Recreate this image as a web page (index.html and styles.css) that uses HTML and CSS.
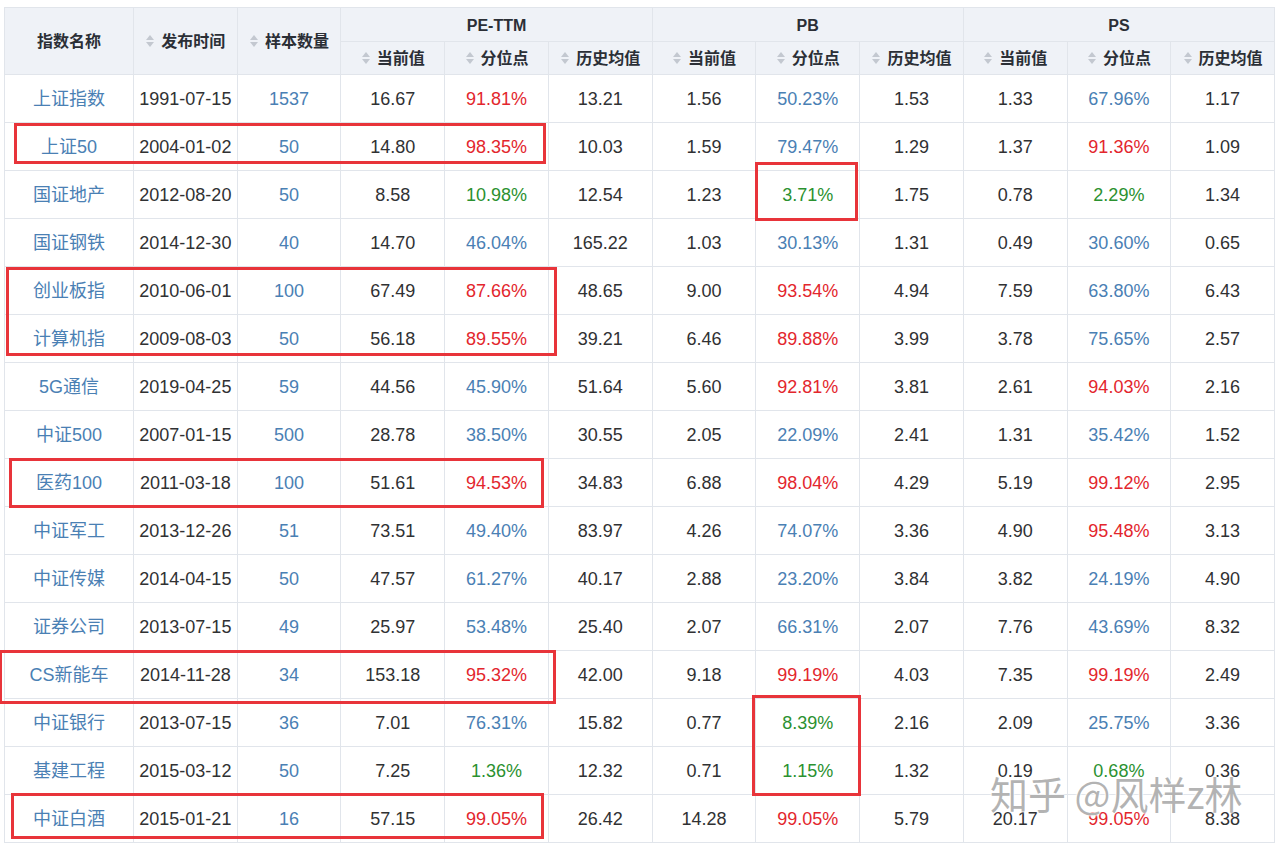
FILE: index.html
```html
<!DOCTYPE html>
<html lang="zh-CN">
<head>
<meta charset="utf-8">
<title>指数估值</title>
<link rel="stylesheet" href="styles.css">
</head>
<body>
<div class="page">
  <table class="grid">
    <colgroup>
      <col class="c-name"><col class="c"><col class="c"><col class="c"><col class="c"><col class="c"><col class="c"><col class="c"><col class="c"><col class="c"><col class="c"><col class="c">
    </colgroup>
    <thead>
      <tr class="h1">
        <th rowspan="2">指数名称</th>
        <th rowspan="2"><span class="sort"><svg viewBox="0 0 10 14"><path d="M5 1 9 6H1Z"/><path d="M1 8H9L5 13Z"/></svg></span>发布时间</th>
        <th rowspan="2"><span class="sort"><svg viewBox="0 0 10 14"><path d="M5 1 9 6H1Z"/><path d="M1 8H9L5 13Z"/></svg></span>样本数量</th>
        <th colspan="3" class="grp">PE-TTM</th>
        <th colspan="3" class="grp">PB</th>
        <th colspan="3" class="grp">PS</th>
      </tr>
      <tr class="h2">
        <th><span class="sort"><svg viewBox="0 0 10 14"><path d="M5 1 9 6H1Z"/><path d="M1 8H9L5 13Z"/></svg></span>当前值</th>
        <th><span class="sort"><svg viewBox="0 0 10 14"><path d="M5 1 9 6H1Z"/><path d="M1 8H9L5 13Z"/></svg></span>分位点</th>
        <th><span class="sort"><svg viewBox="0 0 10 14"><path d="M5 1 9 6H1Z"/><path d="M1 8H9L5 13Z"/></svg></span>历史均值</th>
        <th><span class="sort"><svg viewBox="0 0 10 14"><path d="M5 1 9 6H1Z"/><path d="M1 8H9L5 13Z"/></svg></span>当前值</th>
        <th><span class="sort"><svg viewBox="0 0 10 14"><path d="M5 1 9 6H1Z"/><path d="M1 8H9L5 13Z"/></svg></span>分位点</th>
        <th><span class="sort"><svg viewBox="0 0 10 14"><path d="M5 1 9 6H1Z"/><path d="M1 8H9L5 13Z"/></svg></span>历史均值</th>
        <th><span class="sort"><svg viewBox="0 0 10 14"><path d="M5 1 9 6H1Z"/><path d="M1 8H9L5 13Z"/></svg></span>当前值</th>
        <th><span class="sort"><svg viewBox="0 0 10 14"><path d="M5 1 9 6H1Z"/><path d="M1 8H9L5 13Z"/></svg></span>分位点</th>
        <th><span class="sort"><svg viewBox="0 0 10 14"><path d="M5 1 9 6H1Z"/><path d="M1 8H9L5 13Z"/></svg></span>历史均值</th>
      </tr>
    </thead>
    <tbody>
      <tr><td class="lk">上证指数</td><td>1991-07-15</td><td class="lk">1537</td><td>16.67</td><td class="hi">91.81%</td><td>13.21</td><td>1.56</td><td class="mid">50.23%</td><td>1.53</td><td>1.33</td><td class="mid">67.96%</td><td>1.17</td></tr>
      <tr><td class="lk">上证50</td><td>2004-01-02</td><td class="lk">50</td><td>14.80</td><td class="hi">98.35%</td><td>10.03</td><td>1.59</td><td class="mid">79.47%</td><td>1.29</td><td>1.37</td><td class="hi">91.36%</td><td>1.09</td></tr>
      <tr><td class="lk">国证地产</td><td>2012-08-20</td><td class="lk">50</td><td>8.58</td><td class="lo">10.98%</td><td>12.54</td><td>1.23</td><td class="lo">3.71%</td><td>1.75</td><td>0.78</td><td class="lo">2.29%</td><td>1.34</td></tr>
      <tr><td class="lk">国证钢铁</td><td>2014-12-30</td><td class="lk">40</td><td>14.70</td><td class="mid">46.04%</td><td>165.22</td><td>1.03</td><td class="mid">30.13%</td><td>1.31</td><td>0.49</td><td class="mid">30.60%</td><td>0.65</td></tr>
      <tr><td class="lk">创业板指</td><td>2010-06-01</td><td class="lk">100</td><td>67.49</td><td class="hi">87.66%</td><td>48.65</td><td>9.00</td><td class="hi">93.54%</td><td>4.94</td><td>7.59</td><td class="mid">63.80%</td><td>6.43</td></tr>
      <tr><td class="lk">计算机指</td><td>2009-08-03</td><td class="lk">50</td><td>56.18</td><td class="hi">89.55%</td><td>39.21</td><td>6.46</td><td class="hi">89.88%</td><td>3.99</td><td>3.78</td><td class="mid">75.65%</td><td>2.57</td></tr>
      <tr><td class="lk">5G通信</td><td>2019-04-25</td><td class="lk">59</td><td>44.56</td><td class="mid">45.90%</td><td>51.64</td><td>5.60</td><td class="hi">92.81%</td><td>3.81</td><td>2.61</td><td class="hi">94.03%</td><td>2.16</td></tr>
      <tr><td class="lk">中证500</td><td>2007-01-15</td><td class="lk">500</td><td>28.78</td><td class="mid">38.50%</td><td>30.55</td><td>2.05</td><td class="mid">22.09%</td><td>2.41</td><td>1.31</td><td class="mid">35.42%</td><td>1.52</td></tr>
      <tr><td class="lk">医药100</td><td>2011-03-18</td><td class="lk">100</td><td>51.61</td><td class="hi">94.53%</td><td>34.83</td><td>6.88</td><td class="hi">98.04%</td><td>4.29</td><td>5.19</td><td class="hi">99.12%</td><td>2.95</td></tr>
      <tr><td class="lk">中证军工</td><td>2013-12-26</td><td class="lk">51</td><td>73.51</td><td class="mid">49.40%</td><td>83.97</td><td>4.26</td><td class="mid">74.07%</td><td>3.36</td><td>4.90</td><td class="hi">95.48%</td><td>3.13</td></tr>
      <tr><td class="lk">中证传媒</td><td>2014-04-15</td><td class="lk">50</td><td>47.57</td><td class="mid">61.27%</td><td>40.17</td><td>2.88</td><td class="mid">23.20%</td><td>3.84</td><td>3.82</td><td class="mid">24.19%</td><td>4.90</td></tr>
      <tr><td class="lk">证券公司</td><td>2013-07-15</td><td class="lk">49</td><td>25.97</td><td class="mid">53.48%</td><td>25.40</td><td>2.07</td><td class="mid">66.31%</td><td>2.07</td><td>7.76</td><td class="mid">43.69%</td><td>8.32</td></tr>
      <tr><td class="lk">CS新能车</td><td>2014-11-28</td><td class="lk">34</td><td>153.18</td><td class="hi">95.32%</td><td>42.00</td><td>9.18</td><td class="hi">99.19%</td><td>4.03</td><td>7.35</td><td class="hi">99.19%</td><td>2.49</td></tr>
      <tr><td class="lk">中证银行</td><td>2013-07-15</td><td class="lk">36</td><td>7.01</td><td class="mid">76.31%</td><td>15.82</td><td>0.77</td><td class="lo">8.39%</td><td>2.16</td><td>2.09</td><td class="mid">25.75%</td><td>3.36</td></tr>
      <tr><td class="lk">基建工程</td><td>2015-03-12</td><td class="lk">50</td><td>7.25</td><td class="lo">1.36%</td><td>12.32</td><td>0.71</td><td class="lo">1.15%</td><td>1.32</td><td>0.19</td><td class="lo">0.68%</td><td>0.36</td></tr>
      <tr><td class="lk">中证白酒</td><td>2015-01-21</td><td class="lk">16</td><td>57.15</td><td class="hi">99.05%</td><td>26.42</td><td>14.28</td><td class="hi">99.05%</td><td>5.79</td><td>20.17</td><td class="hi">99.05%</td><td>8.38</td></tr>
    </tbody>
  </table>

  <div class="mark m1"></div>
  <div class="mark m2"></div>
  <div class="mark m3"></div>
  <div class="mark m4"></div>
  <div class="mark m5"></div>
  <div class="mark m6"></div>
  <div class="mark m7"></div>

  <div class="watermark">知乎 @风样z林</div>
</div>
</body>
</html>
```

FILE: styles.css
```css
html, body {
  margin: 0;
  padding: 0;
  background: #ffffff;
}

body {
  font-family: "Liberation Sans", "Noto Sans CJK SC", sans-serif;
  color: #303133;
  overflow: hidden;
}

.page {
  position: relative;
  width: 1280px;
  height: 844px;
  padding: 7px 0 0 4px;
  box-sizing: border-box;
  overflow: hidden;
}

.grid {
  width: 1270px;
  table-layout: fixed;
  border-collapse: collapse;
  border: 1px solid #e1e5eb;
}

.c-name { width: 129px; }
.c { width: 103.73px; }

.grid th,
.grid td {
  border: 1px solid #e1e5eb;
  text-align: center;
  vertical-align: middle;
  padding: 0;
  white-space: nowrap;
  line-height: 20px;
}

.grid th {
  background: #eff2f7;
  font-size: 16px;
  font-weight: bold;
  color: #2b2f36;
  padding-top: 2px;
  box-sizing: border-box;
}

.h1 th { height: 34px; }
.h2 th { height: 33px; }

.grid td {
  height: 47px;
  font-size: 18px;
  color: #303133;
}

.sort {
  display: inline-block;
  width: 10px;
  height: 14px;
  margin-right: 6px;
  vertical-align: -1px;
}

.sort svg {
  display: block;
  width: 10px;
  height: 14px;
  fill: #c3c8d0;
}

.grid td.lk { color: #4a80b4; }
.grid td.mid { color: #4a80b4; }
.grid td.hi { color: #e3262d; }
.grid td.lo { color: #2b9130; }

.mark {
  position: absolute;
  border: 3px solid #e8343a;
  box-sizing: border-box;
}

.m1 { left: 14px; top: 123px; width: 532px; height: 41px; }
.m2 { left: 755px; top: 162px; width: 103px; height: 59px; }
.m3 { left: 6px; top: 267px; width: 551px; height: 89px; }
.m4 { left: 9px; top: 458px; width: 535px; height: 50px; }
.m5 { left: -1px; top: 650px; width: 557px; height: 54px; }
.m6 { left: 752px; top: 695px; width: 109px; height: 101px; }
.m7 { left: 11px; top: 793px; width: 533px; height: 46px; }

.watermark {
  position: absolute;
  left: 990px;
  top: 768px;
  font-family: "Noto Sans CJK SC", sans-serif;
  font-size: 38px;
  line-height: 50px;
  color: rgba(150, 150, 150, 0.72);
  text-shadow: 0 0 2px #ffffff, 0 0 2px #ffffff, 0 0 3px #ffffff;
  white-space: nowrap;
}
```
